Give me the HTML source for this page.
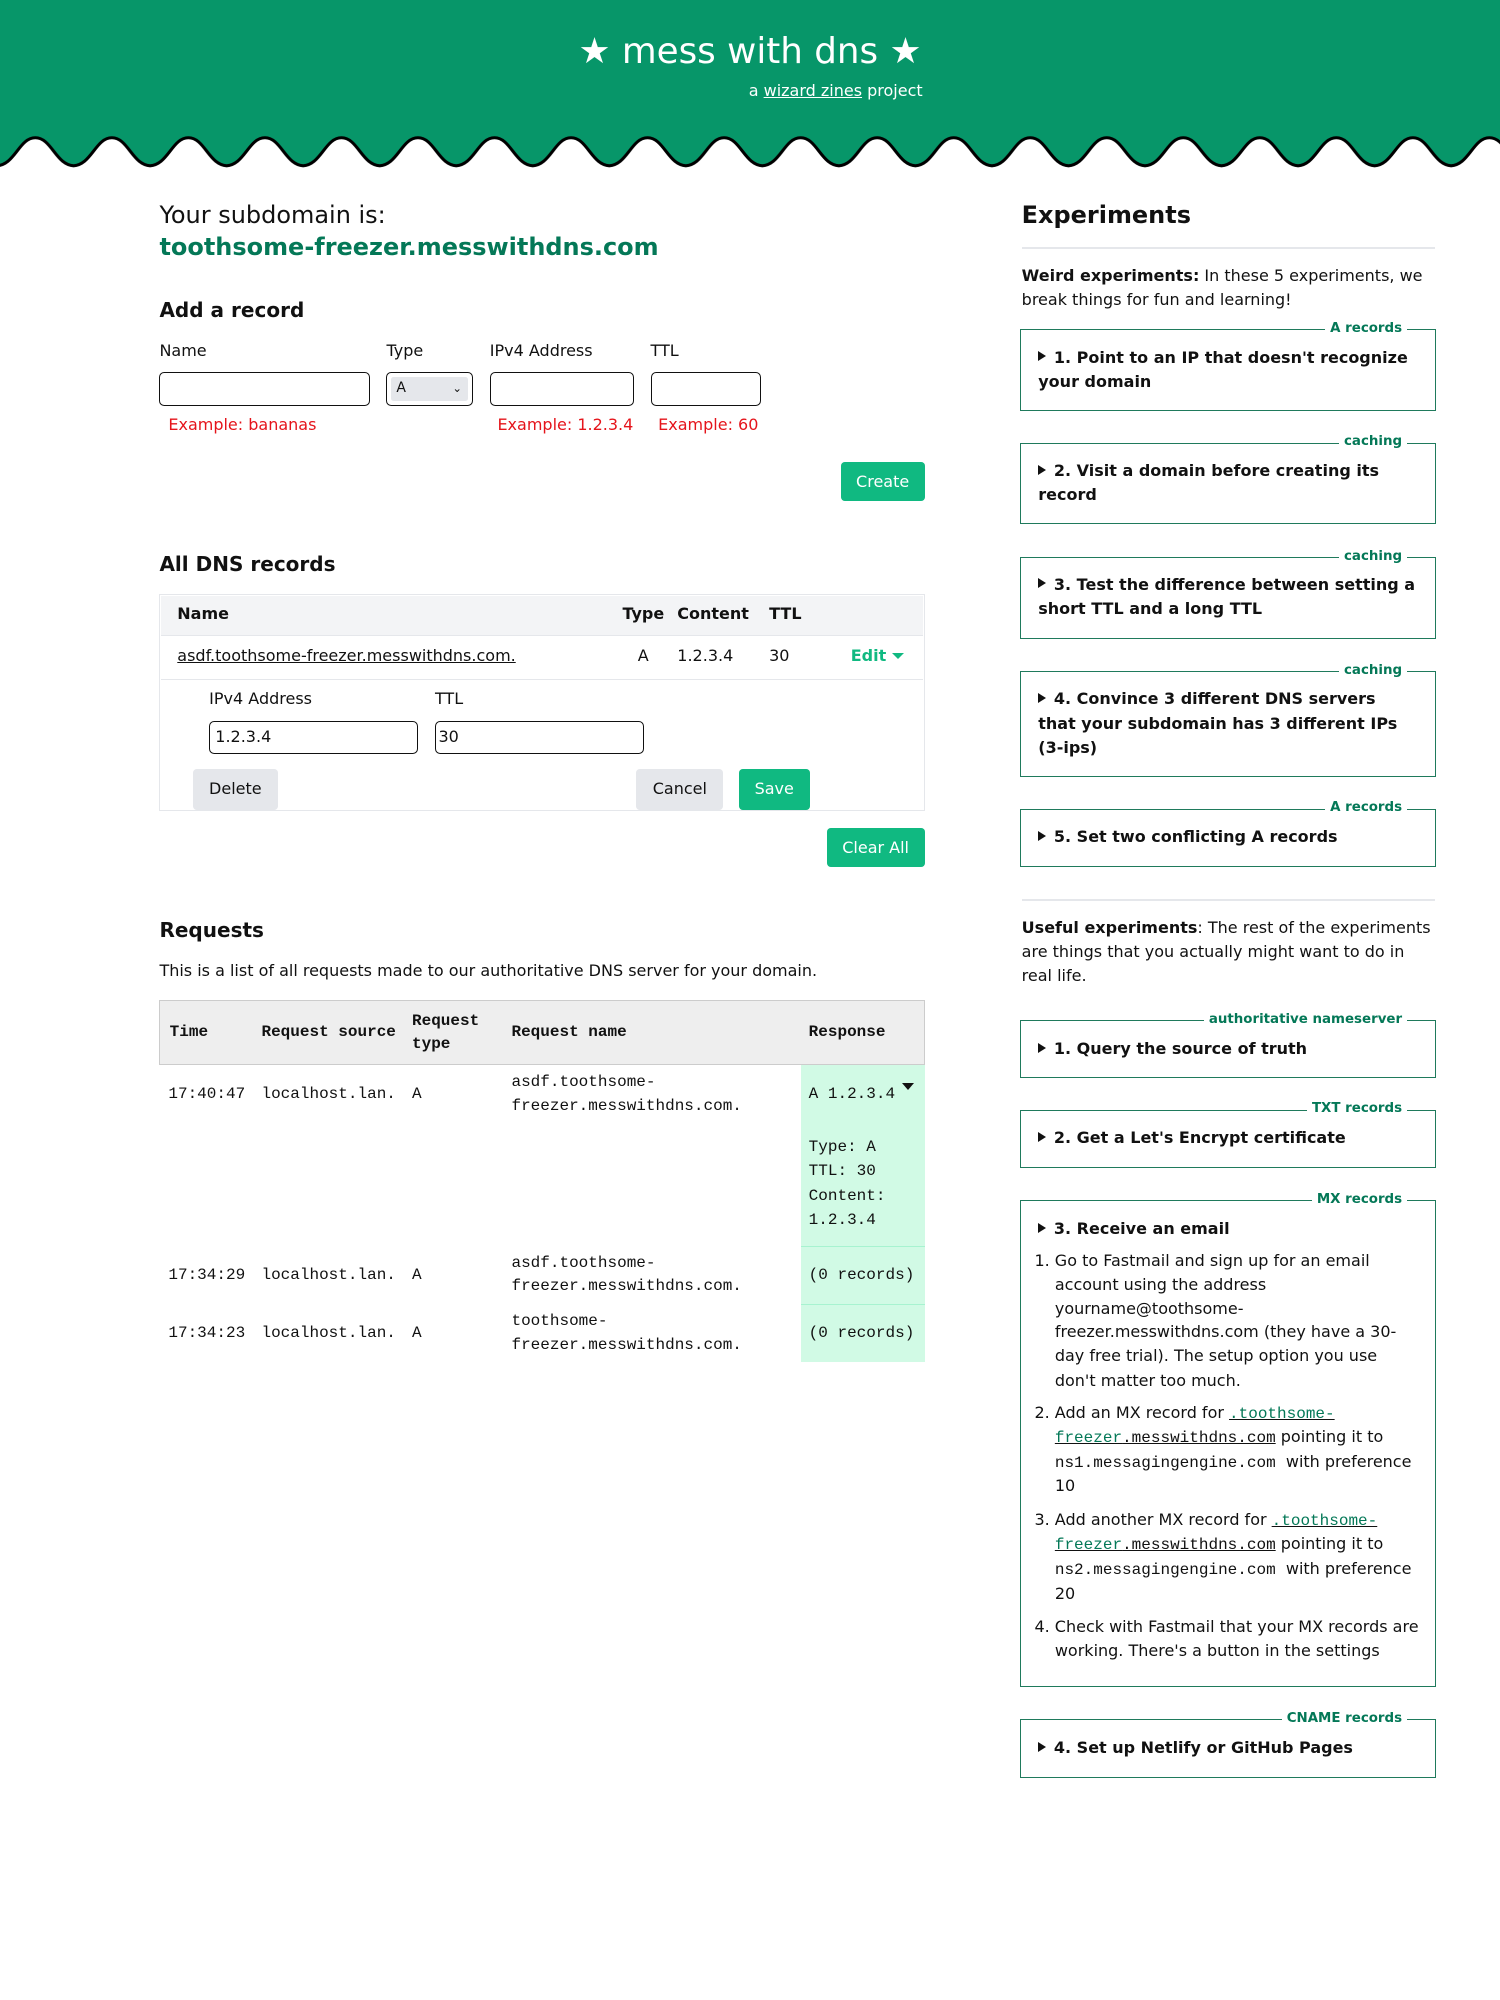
<!DOCTYPE html>
<html><head><meta charset="utf-8"><style>
html,body{margin:0;padding:0;background:#fff;}
body{width:1500px;height:2000px;overflow:hidden;}
#w{zoom:1.27551;width:1176px;height:1568px;position:relative;font-family:"DejaVu Sans","Liberation Sans",sans-serif;font-size:12.55px;color:#111;}
.a{position:absolute;white-space:nowrap;line-height:19px;}
.m{font-family:"Liberation Mono",monospace;font-size:12.55px;}
.b{font-weight:bold;}
.h2{font-size:15.7px;font-weight:bold;}
.inp{position:absolute;border:1px solid #111;border-radius:4px;box-sizing:border-box;height:26px;background:#fff;}
.btn{position:absolute;border-radius:3px;box-sizing:border-box;text-align:center;color:#fff;background:#10b981;}
.gbtn{position:absolute;border-radius:3px;background:#e5e7eb;color:#111;text-align:center;}
.red{color:#e5141b;}
.fs{position:absolute;left:800px;width:326px;border:1px solid #1f7a5c;box-sizing:border-box;}
.lg{position:absolute;right:22px;top:-8px;background:#fff;padding:0 4px;color:#047857;font-weight:bold;font-size:10.5px;line-height:14px;}
.tri{display:inline-block;width:0;height:0;border-left:7px solid #111;border-top:4px solid transparent;border-bottom:4px solid transparent;margin-right:6px;vertical-align:1px;}
.li{position:absolute;left:811px;white-space:nowrap;line-height:19px;}
.gl{color:#047857;}
</style></head><body><div id="w">
<svg style="position:absolute;left:0;top:0" width="1176" height="136">
<defs><pattern id="p" x="-2.3" y="0" width="60" height="136" patternUnits="userSpaceOnUse">
<path d="M0,130 C14,130 17,108 30,108 C43,108 46,130 60,130 L60,0 L0,0 Z" fill="#079669"/>
<path d="M-1,130 C14,130 17,108 30,108 C43,108 46,130 61,130" stroke="#000" stroke-width="2.4" fill="none"/>
</pattern></defs>
<rect x="0" y="0" width="1176" height="136" fill="url(#p)"/>
</svg>
<div class="a" style="left:0;width:1176px;text-align:center;top:23px;font-size:28px;line-height:36px;color:#fff">★ mess with dns ★</div>
<div class="a" style="left:587px;top:62px;color:#fff;font-size:12.55px">a <u>wizard zines</u> project</div>

<div class="a" style="left:125px;top:157px;font-size:18.8px;line-height:24px">Your subdomain is:</div>
<div class="a b" style="left:125px;top:182px;font-size:18.8px;line-height:24px;color:#047857">toothsome-freezer.messwithdns.com</div>
<div class="a h2" style="left:125px;top:234px">Add a record</div>
<div class="a" style="left:125px;top:266px">Name</div>
<div class="a" style="left:303px;top:266px">Type</div>
<div class="a" style="left:384px;top:266px">IPv4 Address</div>
<div class="a" style="left:510px;top:266px">TTL</div>
<div class="inp" style="left:125px;top:292px;width:165px"></div>
<div class="inp" style="left:303px;top:292px;width:68px"><div style="position:absolute;left:3px;top:3px;right:3px;bottom:3px;background:#e5e7eb;border-radius:2px;font-size:11px;line-height:18px;padding-left:4px">A<span style="position:absolute;right:5px;font-size:9px">⌄</span></div></div>
<div class="inp" style="left:384px;top:292px;width:113px"></div>
<div class="inp" style="left:510px;top:292px;width:87px"></div>
<div class="a red" style="left:132px;top:324px">Example: bananas</div>
<div class="a red" style="left:390px;top:324px">Example: 1.2.3.4</div>
<div class="a red" style="left:516px;top:324px">Example: 60</div>
<div class="btn" style="left:659px;top:362px;width:66px;height:31px;line-height:31px">Create</div>

<div class="a h2" style="left:125px;top:433px">All DNS records</div>
<div style="position:absolute;left:125px;top:466px;width:600px;height:170px;border:1px solid #e5e7eb;box-sizing:border-box"></div>
<div style="position:absolute;left:126px;top:467px;width:598px;height:31px;background:#f3f4f6;border-bottom:1px solid #e5e7eb"></div>
<div class="a b" style="left:139px;top:472px">Name</div>
<div class="a b" style="left:488px;top:472px">Type</div>
<div class="a b" style="left:531px;top:472px">Content</div>
<div class="a b" style="left:603px;top:472px">TTL</div>
<div class="a" style="left:139px;top:505px;text-decoration:underline">asdf.toothsome-freezer.messwithdns.com.</div>
<div class="a" style="left:500px;top:505px">A</div>
<div class="a" style="left:531px;top:505px">1.2.3.4</div>
<div class="a" style="left:603px;top:505px">30</div>
<div class="a b" style="left:667px;top:505px;color:#10b981">Edit <span style="display:inline-block;width:0;height:0;border-top:5px solid #10b981;border-left:5px solid transparent;border-right:5px solid transparent;vertical-align:2px"></span></div>
<div style="position:absolute;left:126px;top:532px;width:598px;height:1px;background:#e5e7eb"></div>
<div class="a" style="left:164px;top:539px">IPv4 Address</div>
<div class="a" style="left:341px;top:539px">TTL</div>
<div class="inp" style="left:164px;top:565px;width:164px;line-height:24px;padding-left:4px">1.2.3.4</div>
<div class="inp" style="left:341px;top:565px;width:164px;line-height:24px;padding-left:2px">30</div>
<div class="gbtn" style="left:151px;top:603px;width:67px;height:32px;line-height:32px">Delete</div>
<div class="gbtn" style="left:499px;top:603px;width:68px;height:32px;line-height:32px">Cancel</div>
<div class="btn" style="left:579px;top:603px;width:56px;height:32px;line-height:32px">Save</div>
<div class="btn" style="left:648px;top:649px;width:77px;height:31px;line-height:31px">Clear All</div>

<div class="a h2" style="left:125px;top:720px">Requests</div>
<div class="a" style="left:125px;top:752px">This is a list of all requests made to our authoritative DNS server for your domain.</div>
<div style="position:absolute;left:125px;top:784px;width:600px;height:51px;background:#eeeeee;border:1px solid #ccc;box-sizing:border-box"></div>
<div class="a m b" style="left:133px;top:800px">Time</div>
<div class="a m b" style="left:205px;top:800px">Request source</div>
<div class="a m b" style="left:323px;top:791px">Request</div>
<div class="a m b" style="left:323px;top:809px">type</div>
<div class="a m b" style="left:401px;top:800px">Request name</div>
<div class="a m b" style="left:634px;top:800px">Response</div>
<div style="position:absolute;left:628px;top:835px;width:97px;height:233px;background:#d1fae5"></div>
<div style="position:absolute;left:628px;top:977px;width:97px;height:1px;background:#a7f3d0"></div>
<div style="position:absolute;left:628px;top:1022px;width:97px;height:1px;background:#a7f3d0"></div>
<div class="a m" style="left:132px;top:848px">17:40:47</div>
<div class="a m" style="left:205px;top:848px">localhost.lan.</div>
<div class="a m" style="left:323px;top:848px">A</div>
<div class="a m" style="left:401px;top:839px">asdf.toothsome-</div>
<div class="a m" style="left:401px;top:858px">freezer.messwithdns.com.</div>
<div class="a m" style="left:634px;top:848px">A 1.2.3.4</div>
<div style="position:absolute;left:707px;top:849px;width:0;height:0;border-top:6px solid #111;border-left:5px solid transparent;border-right:5px solid transparent"></div>
<div class="a m" style="left:634px;top:890px">Type: A</div>
<div class="a m" style="left:634px;top:909px">TTL: 30</div>
<div class="a m" style="left:634px;top:928px">Content:</div>
<div class="a m" style="left:634px;top:947px">1.2.3.4</div>
<div class="a m" style="left:132px;top:990px">17:34:29</div>
<div class="a m" style="left:205px;top:990px">localhost.lan.</div>
<div class="a m" style="left:323px;top:990px">A</div>
<div class="a m" style="left:401px;top:981px">asdf.toothsome-</div>
<div class="a m" style="left:401px;top:999px">freezer.messwithdns.com.</div>
<div class="a m" style="left:634px;top:990px">(0 records)</div>
<div class="a m" style="left:132px;top:1036px">17:34:23</div>
<div class="a m" style="left:205px;top:1036px">localhost.lan.</div>
<div class="a m" style="left:323px;top:1036px">A</div>
<div class="a m" style="left:401px;top:1026px">toothsome-</div>
<div class="a m" style="left:401px;top:1045px">freezer.messwithdns.com.</div>
<div class="a m" style="left:634px;top:1036px">(0 records)</div>

<div class="a b" style="left:801px;top:157px;font-size:18.8px;line-height:24px">Experiments</div>
<div style="position:absolute;left:801px;top:194px;width:324px;height:1px;background:#e5e7eb"></div>
<div class="a" style="left:801px;top:207px"><b>Weird experiments:</b> In these 5 experiments, we</div>
<div class="a" style="left:801px;top:226px">break things for fun and learning!</div>

<div class="fs" style="top:258px;height:64px"><span class="lg">A records</span></div>
<div class="a b" style="left:814px;top:271px"><span class="tri"></span>1. Point to an IP that doesn't recognize</div>
<div class="a b" style="left:814px;top:290px">your domain</div>
<div class="fs" style="top:347px;height:64px"><span class="lg">caching</span></div>
<div class="a b" style="left:814px;top:360px"><span class="tri"></span>2. Visit a domain before creating its</div>
<div class="a b" style="left:814px;top:379px">record</div>
<div class="fs" style="top:437px;height:64px"><span class="lg">caching</span></div>
<div class="a b" style="left:814px;top:449px"><span class="tri"></span>3. Test the difference between setting a</div>
<div class="a b" style="left:814px;top:468px">short TTL and a long TTL</div>
<div class="fs" style="top:526px;height:83px"><span class="lg">caching</span></div>
<div class="a b" style="left:814px;top:539px"><span class="tri"></span>4. Convince 3 different DNS servers</div>
<div class="a b" style="left:814px;top:558px">that your subdomain has 3 different IPs</div>
<div class="a b" style="left:814px;top:577px">(3-ips)</div>
<div class="fs" style="top:634px;height:46px"><span class="lg">A records</span></div>
<div class="a b" style="left:814px;top:647px"><span class="tri"></span>5. Set two conflicting A records</div>
<div style="position:absolute;left:801px;top:705px;width:324px;height:1px;background:#e5e7eb"></div>
<div class="a" style="left:801px;top:718px"><b>Useful experiments</b>: The rest of the experiments</div>
<div class="a" style="left:801px;top:737px">are things that you actually might want to do in</div>
<div class="a" style="left:801px;top:756px">real life.</div>
<div class="fs" style="top:800px;height:45px"><span class="lg">authoritative nameserver</span></div>
<div class="a b" style="left:814px;top:813px"><span class="tri"></span>1. Query the source of truth</div>
<div class="fs" style="top:870px;height:46px"><span class="lg">TXT records</span></div>
<div class="a b" style="left:814px;top:883px"><span class="tri"></span>2. Get a Let's Encrypt certificate</div>
<div class="fs" style="top:941px;height:382px"><span class="lg">MX records</span></div>
<div class="a b" style="left:814px;top:954px"><span class="tri"></span>3. Receive an email</div>
<div class="li" style="top:979px">1. Go to Fastmail and sign up for an email</div>
<div class="li" style="top:998px;left:827px">account using the address</div>
<div class="li" style="top:1017px;left:827px">yourname@toothsome-</div>
<div class="li" style="top:1035px;left:827px">freezer.messwithdns.com (they have a 30-</div>
<div class="li" style="top:1054px;left:827px">day free trial). The setup option you use</div>
<div class="li" style="top:1073px;left:827px">don't matter too much.</div>
<div class="li" style="top:1098px">2. Add an MX record for <u class="m"><span class="gl">.toothsome-</span></u></div>
<div class="li" style="top:1117px;left:827px"><u class="m"><span class="gl">freezer</span>.messwithdns.com</u> pointing it to</div>
<div class="li" style="top:1137px;left:827px"><span class="m">ns1.messagingengine.com</span>&nbsp; with preference</div>
<div class="li" style="top:1156px;left:827px">10</div>
<div class="li" style="top:1182px">3. Add another MX record for <u class="m"><span class="gl">.toothsome-</span></u></div>
<div class="li" style="top:1201px;left:827px"><u class="m"><span class="gl">freezer</span>.messwithdns.com</u> pointing it to</div>
<div class="li" style="top:1221px;left:827px"><span class="m">ns2.messagingengine.com</span>&nbsp; with preference</div>
<div class="li" style="top:1240px;left:827px">20</div>
<div class="li" style="top:1266px">4. Check with Fastmail that your MX records are</div>
<div class="li" style="top:1285px;left:827px">working. There's a button in the settings</div>
<div class="fs" style="top:1348px;height:46px"><span class="lg">CNAME records</span></div>
<div class="a b" style="left:814px;top:1361px"><span class="tri"></span>4. Set up Netlify or GitHub Pages</div>
</div></body></html>
